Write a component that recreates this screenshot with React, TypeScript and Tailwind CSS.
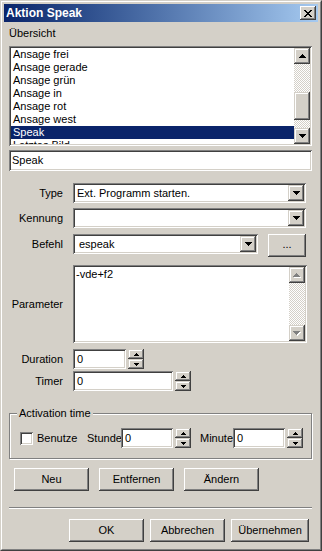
import React from 'react';

const SUNKEN =
  'shadow-[inset_1px_1px_0_#808080,inset_-1px_-1px_0_#ffffff,inset_2px_2px_0_#404040,inset_-2px_-2px_0_#d4d0c8]';
const RAISED =
  'shadow-[inset_-1px_-1px_0_#404040,inset_1px_1px_0_#ffffff,inset_-2px_-2px_0_#808080]';
const RAISED_SB =
  'shadow-[inset_-1px_-1px_0_#404040,inset_1px_1px_0_#d4d0c8,inset_-2px_-2px_0_#808080,inset_2px_2px_0_#ffffff]';
const TRACK =
  'bg-[image:repeating-conic-gradient(#ffffff_0_25%,#d4d0c8_0_50%)] bg-[length:2px_2px]';

function Tri({ dir, w = 7, color = '#000' }: { dir: 'up' | 'down'; w?: number; color?: string }) {
  const h = Math.ceil(w / 2);
  const rects = [];
  for (let i = 0; i < h; i++) {
    const y = dir === 'down' ? i : h - 1 - i;
    rects.push(<rect key={i} x={i} y={y} width={w - 2 * i} height={1} fill={color} />);
  }
  return (
    <svg width={w} height={h} shapeRendering="crispEdges" className="block">
      {rects}
    </svg>
  );
}

function DisabledTri({ dir }: { dir: 'up' | 'down' }) {
  return (
    <span className="relative block w-[8px] h-[5px]">
      <span className="absolute left-[1px] top-[1px]">
        <Tri dir={dir} color="#ffffff" />
      </span>
      <span className="absolute left-0 top-0">
        <Tri dir={dir} color="#808080" />
      </span>
    </span>
  );
}

function CloseX() {
  const rows = ['11000011', '01100110', '00111100', '00011000', '00111100', '01100110', '11000011'];
  return (
    <svg width={8} height={7} shapeRendering="crispEdges" className="block">
      {rows.flatMap((r, y) =>
        r.split('').map((c, x) => (c === '1' ? <rect key={`${x}-${y}`} x={x} y={y} width={1} height={1} fill="#000" /> : null))
      )}
    </svg>
  );
}

function SbButton({ dir, disabled }: { dir: 'up' | 'down'; disabled?: boolean }) {
  return (
    <div className={`w-[16px] h-[16px] shrink-0 bg-[#d4d0c8] ${RAISED_SB} flex items-center justify-center`}>
      {disabled ? <DisabledTri dir={dir} /> : <Tri dir={dir} />}
    </div>
  );
}

function Combo({ value, width, textPad = 'pl-[2px]' }: { value: string; width: string; textPad?: string }) {
  return (
    <div className={`${width} h-[20px] shrink-0 bg-white ${SUNKEN} p-[2px] flex`}>
      <div className={`flex-1 ${textPad} leading-[16px] whitespace-nowrap overflow-hidden`}>{value}</div>
      <SbButton dir="down" />
    </div>
  );
}

function Edit({ value, width }: { value: string; width: string }) {
  return (
    <div className={`${width} h-[20px] shrink-0 bg-white ${SUNKEN} pl-[4px] flex items-center`}>{value}</div>
  );
}

function Spin() {
  return (
    <div className="w-[16px] h-[20px] shrink-0 ml-[2px] flex flex-col">
      <div className={`h-[10px] bg-[#d4d0c8] ${RAISED_SB} flex items-center justify-center`}>
        <Tri dir="up" w={5} />
      </div>
      <div className={`h-[10px] bg-[#d4d0c8] ${RAISED_SB} flex items-center justify-center`}>
        <Tri dir="down" w={5} />
      </div>
    </div>
  );
}

function Button({ label, width = 'w-[75px]' }: { label: string; width?: string }) {
  return (
    <div className={`${width} h-[23px] bg-[#d4d0c8] ${RAISED} flex items-center justify-center`}>{label}</div>
  );
}

function Label({ text }: { text: string }) {
  return <div className="w-[54px] shrink-0 mr-[10px] text-right whitespace-nowrap">{text}</div>;
}

const items = ['Ansage frei', 'Ansage gerade', 'Ansage grün', 'Ansage in', 'Ansage rot', 'Ansage west', 'Speak', 'Letztes Bild'];

export default function App() {
  return (
    <div className="w-[322px] h-[551px] bg-[#d4d0c8] border border-t-[#d4d0c8] border-l-[#d4d0c8] border-r-[#404040] border-b-[#404040] font-['Liberation_Sans',Arial,sans-serif] text-[11px] leading-[13px] text-black overflow-hidden">
      <div className="h-full border border-t-white border-l-white border-r-[#808080] border-b-[#808080] p-[2px] flex flex-col">
        {/* Title bar */}
        <div className="h-[18px] shrink-0 flex items-center justify-between bg-linear-to-r from-[#0a246a] to-[#a6caf0]">
          <span className="pl-[2px] text-white font-bold text-[12px]">Aktion Speak</span>
          <div className={`w-[16px] h-[14px] mr-[2px] bg-[#d4d0c8] ${RAISED} flex items-center justify-center`}>
            <CloseX />
          </div>
        </div>

        <div className="pl-[5px] pr-[6px] flex flex-col">
          <div className="mt-[5px] h-[13px]">Übersicht</div>

          {/* List */}
          <div className={`mt-[6px] h-[100px] bg-white ${SUNKEN} p-[2px] flex`}>
            <div className="flex-1 overflow-hidden">
              {items.map(it => (
                <div
                  key={it}
                  className={`h-[13px] pl-[2px] whitespace-nowrap ${it === 'Speak' ? 'bg-[#0a246a] text-white' : ''}`}
                >
                  {it}
                </div>
              ))}
            </div>
            <div className="w-[16px] flex flex-col">
              <SbButton dir="up" />
              <div className={`h-[28px] ${TRACK}`} />
              <div className={`h-[28px] bg-[#d4d0c8] ${RAISED_SB}`} />
              <div className={`h-[8px] ${TRACK}`} />
              <SbButton dir="down" />
            </div>
          </div>

          <div className={`mt-[4px] h-[21px] bg-white ${SUNKEN} pl-[3px] flex items-center`}>Speak</div>

          {/* Form rows */}
          <div className="mt-[12px] flex items-center">
            <Label text="Type" />
            <Combo value="Ext. Programm starten." width="w-[233px]" />
          </div>
          <div className="mt-[5px] flex items-center">
            <Label text="Kennung" />
            <Combo value="" width="w-[233px]" />
          </div>
          <div className="mt-[6px] flex items-start">
            <div className="h-[20px] flex items-center">
              <Label text="Befehl" />
            </div>
            <Combo value="espeak" width="w-[185px]" textPad="pl-[4px]" />
            <div className={`ml-[10px] w-[38px] h-[23px] bg-[#d4d0c8] ${RAISED} flex items-center justify-center pb-[2px]`}>
              ...
            </div>
          </div>
          <div className="mt-[8px] flex items-center">
            <Label text="Parameter" />
            <div className={`w-[234px] h-[78px] bg-white ${SUNKEN} p-[2px] flex`}>
              <div className="flex-1 pl-[1px] pt-[1px]">-vde+f2</div>
              <div className="w-[16px] flex flex-col">
                <SbButton dir="up" disabled />
                <div className={`flex-1 ${TRACK}`} />
                <SbButton dir="down" disabled />
              </div>
            </div>
          </div>
          <div className="mt-[6px] flex items-center">
            <Label text="Duration" />
            <Edit value="0" width="w-[53px]" />
            <Spin />
          </div>
          <div className="mt-[2px] flex items-center">
            <Label text="Timer" />
            <Edit value="0" width="w-[100px]" />
            <Spin />
          </div>

          {/* Activation time group */}
          <div className="mt-[22px] h-[46px] relative border border-[#808080] shadow-[inset_1px_1px_0_#ffffff,1px_1px_0_#ffffff] pt-[14px] pl-[10px]">
            <span className="absolute left-[7px] top-[-7px] px-[2px] bg-[#d4d0c8]">Activation time</span>
            <div className="h-[20px] flex items-center">
              <div className={`w-[13px] h-[13px] bg-white ${SUNKEN}`} />
              <div className="ml-[4px] w-[50px]">Benutze</div>
              <div className="w-[34px] whitespace-nowrap">Stunde</div>
              <Edit value="0" width="w-[52px]" />
              <Spin />
              <div className="ml-[9px] w-[33px] whitespace-nowrap">Minute</div>
              <Edit value="0" width="w-[52px]" />
              <Spin />
            </div>
          </div>

          <div className="mt-[9px] pl-[5px] flex gap-[10px]">
            <Button label="Neu" />
            <Button label="Entfernen" />
            <Button label="Ändern" />
          </div>

          <div className="mt-[16px] h-[2px] border-t border-t-[#808080] border-b border-b-white" />

          <div className="mt-[10px] pl-[60px] flex gap-[6px]">
            <Button label="OK" />
            <Button label="Abbrechen" />
            <Button label="Übernehmen" width="w-[78px]" />
          </div>
        </div>
      </div>
    </div>
  );
}
